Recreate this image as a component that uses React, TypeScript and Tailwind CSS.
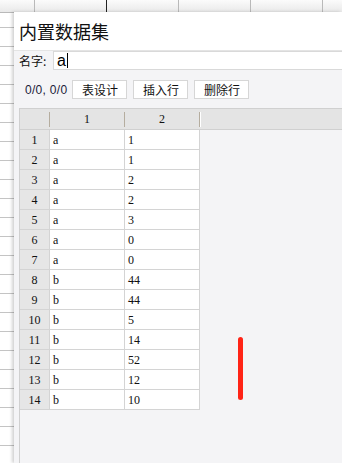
const rows: [string, string][] = [
  ["a", "1"],
  ["a", "1"],
  ["a", "2"],
  ["a", "2"],
  ["a", "3"],
  ["a", "0"],
  ["a", "0"],
  ["b", "44"],
  ["b", "44"],
  ["b", "5"],
  ["b", "14"],
  ["b", "52"],
  ["b", "12"],
  ["b", "10"],
]

const sheetCols = [35, 72, 72, 72, 72, 72]
const cjk = "font-['Noto_Sans_CJK_SC',sans-serif]"
const serif = "font-['Liberation_Serif','Noto_Sans_CJK_SC',serif]"

function Button({ label }: { label: string }) {
  return (
    <button
      className={`h-[19px] w-[55px] border border-[#d6d6d6] bg-white text-[12px] leading-none text-[#111] ${cjk}`}
    >
      {label}
    </button>
  )
}

export default function App() {
  return (
    <div className="relative h-[463px] w-[342px] overflow-hidden bg-white">
      {/* sheet behind the dialog */}
      <div className="flex h-[13px] border-b border-[#b9b9b9] bg-gradient-to-b from-[#fbfbfb] to-[#e9e9e9]">
        {sheetCols.map((w, i) => (
          <div
            key={i}
            className={`h-full shrink-0 border-r ${i === 1 ? "border-[#222]" : "border-[#b9b9b9]"}`}
            style={{ width: w }}
          />
        ))}
      </div>
      <div className="flex flex-col">
        <div className="h-[15px] border-b border-[#c4c4c4]" />
        {Array.from({ length: 24 }).map((_, i) => (
          <div key={i} className="h-[19px] border-b border-[#c4c4c4]" />
        ))}
      </div>

      {/* dialog */}
      <div className="absolute bottom-0 left-[14px] right-0 top-[12px] flex flex-col bg-[#f4f4f6] shadow-[-2px_0_3px_rgba(0,0,0,0.18)]">
        <div className={`flex h-[39px] items-center border-b border-[#e4e4e4] bg-white pl-[5px] text-[18px] text-[#111] ${cjk}`}>
          内置数据集
        </div>

        <div className="flex h-[19px] items-center pl-[5px]">
          <span className={`w-[34px] text-[12px] text-[#111] ${cjk}`}>名字:</span>
          <div className="flex h-[19px] flex-1 items-center border border-r-0 border-[#d9d9d9] bg-white pl-[3px]">
            <span className="font-['Liberation_Sans',sans-serif] text-[16px] leading-none text-black">a</span>
            <span className="ml-[1px] h-[15px] w-px bg-black" />
          </div>
        </div>

        <div className="mt-[10px] flex h-[19px] items-center pl-[11px]">
          <span className="mr-[5px] font-['Liberation_Sans',sans-serif] text-[12px] leading-none tracking-[0.3px] text-[#1b1b3a]">
            0/0, 0/0
          </span>
          <div className="flex gap-[6px]">
            <Button label="表设计" />
            <Button label="插入行" />
            <Button label="删除行" />
          </div>
        </div>

        <div className="ml-[5px] mt-[9px] flex flex-1 flex-col border-l border-[#d0d0d0]">
          <div className={`flex h-[22px] items-center border-y border-[#d0d0d0] bg-[#e4e4e4] text-[12px] text-[#111] ${serif}`}>
            <div className="w-[29px]" />
            <div className="h-[15px] w-px bg-[#b5ad9f]" />
            <div className="w-[74px] text-center">1</div>
            <div className="h-[15px] w-px bg-[#b5ad9f]" />
            <div className="w-[74px] text-center">2</div>
            <div className="h-[15px] w-px bg-[#b5ad9f]" />
            <div className="h-[15px] w-px bg-white" />
          </div>
          <div className={`flex w-[180px] flex-col text-[12px] text-[#111] ${serif}`}>
            {rows.map(([name, value], i) => (
              <div key={i} className="grid h-[20px] grid-cols-[30px_75px_75px] border-b border-[#d4d4d4]">
                <div className="flex items-center justify-center border-r border-[#d4d4d4] bg-[#e6e6e6]">
                  {i + 1}
                </div>
                <div className="flex items-center border-r border-[#d4d4d4] bg-white pl-[3px]">{name}</div>
                <div className="flex items-center border-r border-[#d4d4d4] bg-white pl-[3px]">{value}</div>
              </div>
            ))}
          </div>
        </div>

        <div className="absolute left-[224px] top-[325px] h-[63px] w-[5px] rounded-full bg-[#ff2416]" />
      </div>
    </div>
  )
}
